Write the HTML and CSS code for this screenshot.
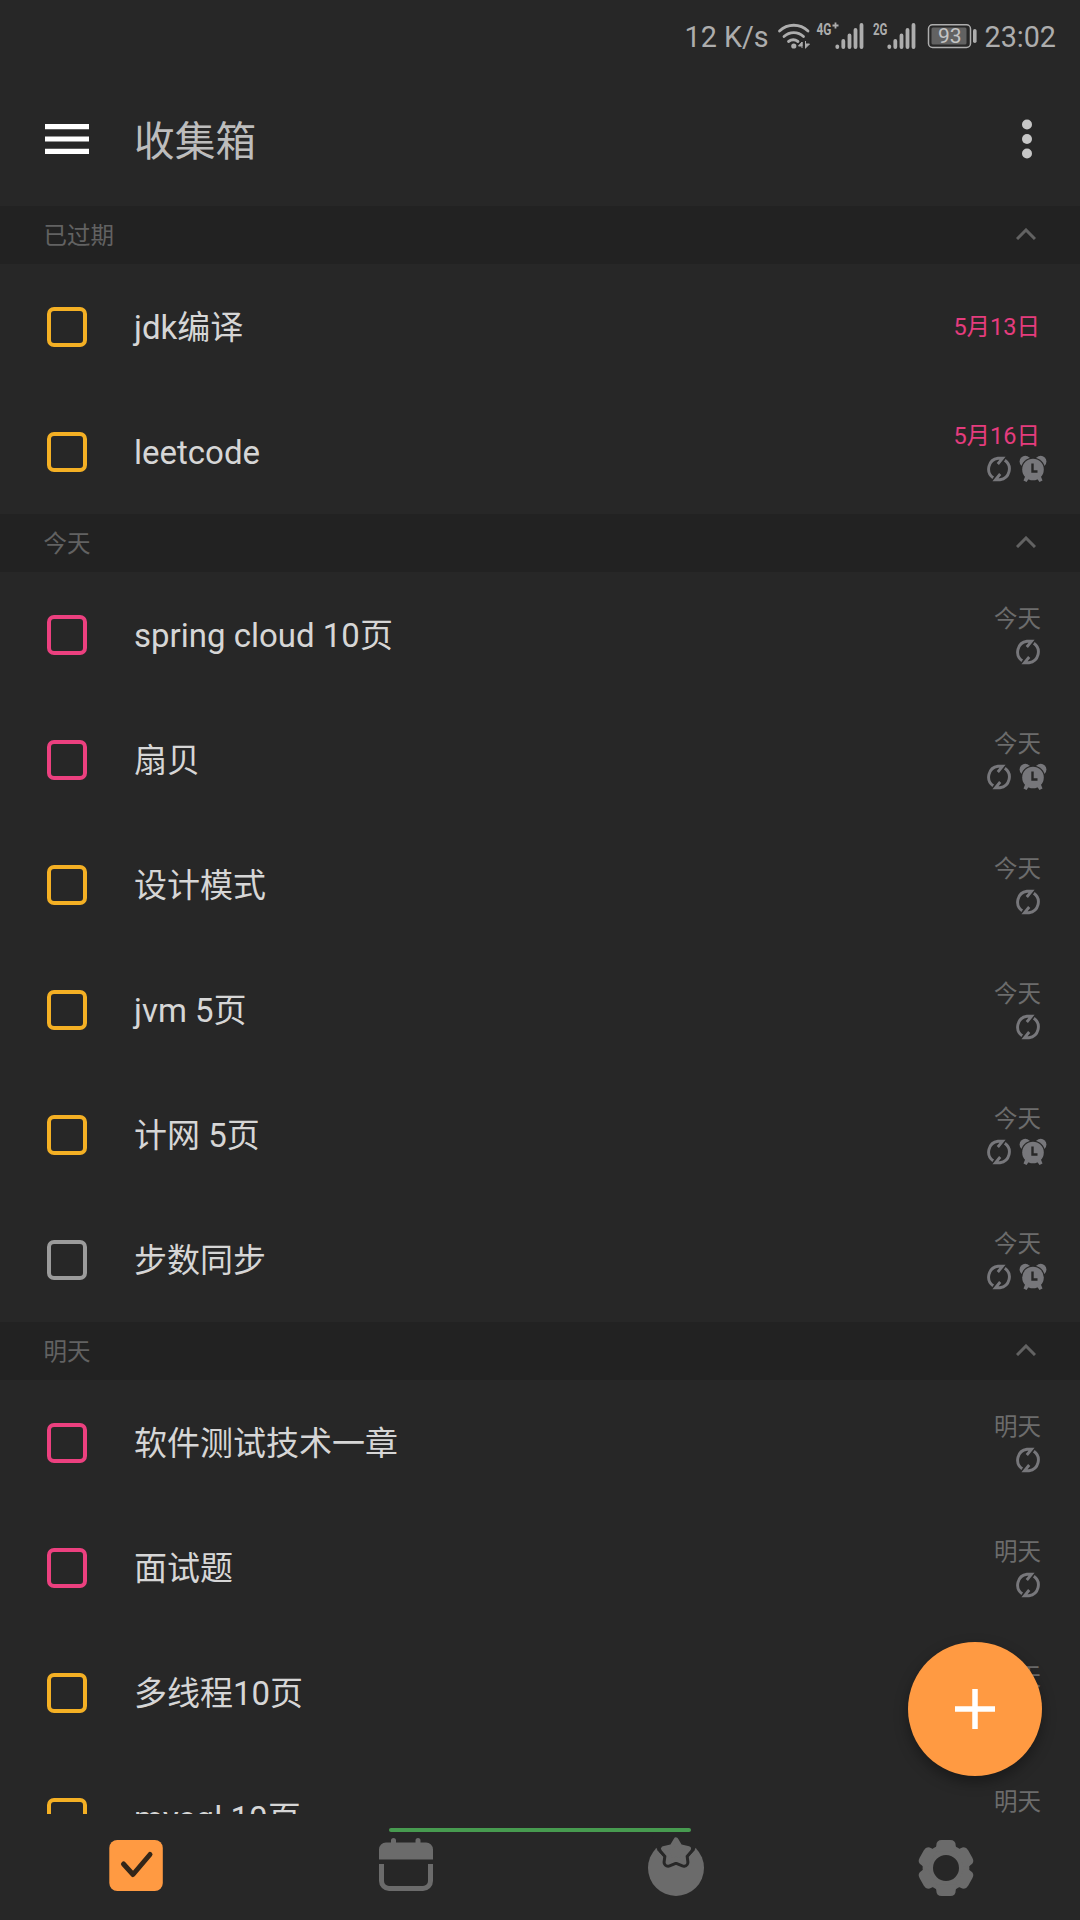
FILE: index.html
```html
<!DOCTYPE html>
<html lang="zh-CN">
<head>
<meta charset="utf-8">
<title>收集箱</title>
<link rel="stylesheet" href="styles.css">
</head>
<body>
<svg class="defs" aria-hidden="true">
  <symbol id="sync" viewBox="0 0 26 26">
    <g fill="none" stroke="currentColor" stroke-width="2.900">
      <path d="M7.200 21.800A10.800 10.800 0 0 1 12 2.300H16.500L11.800 8"/>
      <path d="M18.800 4.200A10.800 10.800 0 0 1 14 23.700H9.500L14.200 18"/>
    </g>
  </symbol>
  <symbol id="alarm" viewBox="0 0 28 28">
    <circle cx="6.300" cy="6.500" r="5.700" fill="currentColor"/>
    <circle cx="21.700" cy="6.500" r="5.700" fill="currentColor"/>
    <circle cx="14" cy="14.500" r="12" fill="#272727"/>
    <circle cx="14" cy="14.500" r="10.800" fill="currentColor"/>
    <path fill="currentColor" d="M6.500 20.500l3.500 3L7.500 27 4.500 25.500zM21.500 20.500l-3.500 3 2.500 3.500 3-1.500z"/>
    <path d="M13.500 8.500v8h5" fill="none" stroke="#272727" stroke-width="2.400"/>
  </symbol>
  <symbol id="chevron" viewBox="0 0 20 12">
    <path d="M1 11l9-9 9 9" fill="none" stroke="currentColor" stroke-width="3"/>
  </symbol>
</svg>

<div class="screen">
  <div class="status">
    <span>12 K/s</span>
    <svg class="status-icons" viewBox="776 16 204 40">
      <g fill="none" stroke="#adadad" stroke-width="2.800" stroke-linecap="round">
        <path d="M779.500 31a20.500 20.500 0 0 1 28.500 0"/>
        <path d="M784 36.500a14 14 0 0 1 19.500 0"/>
        <path d="M788.500 41.500a8 8 0 0 1 9.500 0" />
      </g>
      <circle cx="793.800" cy="46" r="2.600" fill="#adadad"/>
      <path d="M802 42v6M802 42l-3.500 4h3.500zM805.500 41v7.500M805.500 48l4-4h-4z" fill="#adadad" stroke="#adadad" stroke-width="1"/>
      <g fill="#adadad" font-family="Roboto, sans-serif" font-weight="700" font-size="16">
        <text x="816.500" y="35" textLength="15" lengthAdjust="spacingAndGlyphs">4G</text>
        <text x="873" y="35" textLength="14.500" lengthAdjust="spacingAndGlyphs">2G</text>
      </g>
      <path d="M832.500 25.500h6M835.500 22.500v6" stroke="#adadad" stroke-width="1.800"/>
      <g stroke="#adadad" stroke-width="3.800" stroke-linecap="round">
        <path d="M837.300 46.500v.500M843.300 41v6M849.500 35.500v11.500M855.500 30v17M861.500 25v22"/>
        <path d="M889.300 46.500v.500M895.300 41v6M901.500 35.500v11.500M907.500 30v17M913.500 25v22"/>
      </g>
      <rect x="928.500" y="24.800" width="42" height="22.600" rx="4" fill="none" stroke="#adadad" stroke-width="1.500"/>
      <rect x="931.500" y="27.500" width="35" height="17" rx="1.500" fill="#626262"/>
      <rect x="973" y="29" width="3.600" height="14" rx="1.800" fill="#adadad"/>
      <text x="949.800" y="43.300" text-anchor="middle" font-family="Roboto, sans-serif" font-size="21" fill="#c4c4c4">93</text>
    </svg>
    <span>23:02</span>
  </div>

  <header class="toolbar">
    <svg class="menu" viewBox="0 0 44 30"><path d="M0 2.700h44M0 15h44M0 27.300h44" stroke="#fff" stroke-width="5.200"/></svg>
    <h1>收集箱</h1>
    <svg class="more" viewBox="0 0 10 40" fill="#c6c6c6"><circle cx="5" cy="5.500" r="5"/><circle cx="5" cy="20" r="5"/><circle cx="5" cy="34.500" r="5"/></svg>
  </header>

  <main class="list">
    <div class="section"><span>已过期</span><svg><use href="#chevron"/></svg></div>
    <div class="task amber"><i class="box"></i><span class="name">jdk编译</span><div class="meta due single"><span>5月13日</span></div></div>
    <div class="task amber"><i class="box"></i><span class="name">leetcode</span><div class="meta due"><span>5月16日</span><div class="marks pair"><svg><use href="#sync"/></svg><svg class="alarm"><use href="#alarm"/></svg></div></div></div>

    <div class="section"><span>今天</span><svg><use href="#chevron"/></svg></div>
    <div class="task pink"><i class="box"></i><span class="name">spring cloud 10页</span><div class="meta"><span>今天</span><div class="marks"><svg><use href="#sync"/></svg></div></div></div>
    <div class="task pink"><i class="box"></i><span class="name">扇贝</span><div class="meta"><span>今天</span><div class="marks pair"><svg><use href="#sync"/></svg><svg class="alarm"><use href="#alarm"/></svg></div></div></div>
    <div class="task amber"><i class="box"></i><span class="name">设计模式</span><div class="meta"><span>今天</span><div class="marks"><svg><use href="#sync"/></svg></div></div></div>
    <div class="task amber"><i class="box"></i><span class="name">jvm 5页</span><div class="meta"><span>今天</span><div class="marks"><svg><use href="#sync"/></svg></div></div></div>
    <div class="task amber"><i class="box"></i><span class="name">计网 5页</span><div class="meta"><span>今天</span><div class="marks pair"><svg><use href="#sync"/></svg><svg class="alarm"><use href="#alarm"/></svg></div></div></div>
    <div class="task grey"><i class="box"></i><span class="name">步数同步</span><div class="meta"><span>今天</span><div class="marks pair"><svg><use href="#sync"/></svg><svg class="alarm"><use href="#alarm"/></svg></div></div></div>

    <div class="section"><span>明天</span><svg><use href="#chevron"/></svg></div>
    <div class="task pink"><i class="box"></i><span class="name">软件测试技术一章</span><div class="meta"><span>明天</span><div class="marks"><svg><use href="#sync"/></svg></div></div></div>
    <div class="task pink"><i class="box"></i><span class="name">面试题</span><div class="meta"><span>明天</span><div class="marks"><svg><use href="#sync"/></svg></div></div></div>
    <div class="task amber"><i class="box"></i><span class="name">多线程10页</span><div class="meta"><span>明天</span><div class="marks"><svg><use href="#sync"/></svg></div></div></div>
    <div class="task amber"><i class="box"></i><span class="name">mysql 10页</span><div class="meta"><span>明天</span><div class="marks"><svg><use href="#sync"/></svg></div></div></div>
  </main>

  <nav class="tabs">
    <svg viewBox="0 0 60 64">
      <rect x="3.300" y="4" width="53.500" height="51" rx="8" fill="#ff9a42"/>
      <path d="M17.500 28l9.500 10.500L44 18.500" fill="none" stroke="#332619" stroke-width="5" stroke-linecap="round" stroke-linejoin="round"/>
    </svg>
    <svg viewBox="0 0 60 64">
      <path d="M3 23.500V13.500a7 7 0 0 1 7-7h5V4.500a2.500 2.500 0 0 1 5 0v2h19.500v-2a2.500 2.500 0 0 1 5 0v2H50a7 7 0 0 1 7 7v10z" fill="#6b6b6b"/>
      <path d="M5.500 28v17a7.500 7.500 0 0 0 7.500 7.500h34a7.500 7.500 0 0 0 7.500-7.500V28" fill="none" stroke="#6b6b6b" stroke-width="5"/>
    </svg>
    <svg viewBox="0 0 60 64">
      <circle cx="30" cy="32" r="28" fill="#6b6b6b"/>
      <path d="M6 0h48L48.500 14.500 42 21H18l-6.500-6.500z" fill="#272727"/>
      <path d="M30 4l4 6.700 8.500 2-5.500 6.500.900 7-7.900-3.200-7.900 3.200.900-7-5.500-6.500 8.500-2z" fill="#272727" stroke="#272727" stroke-width="11" stroke-linejoin="round"/>
      <path d="M30 4l4 6.700 8.500 2-5.500 6.500.900 7-7.900-3.200-7.900 3.200.900-7-5.500-6.500 8.500-2z" fill="#6b6b6b" stroke="#6b6b6b" stroke-width="5" stroke-linejoin="round"/>
    </svg>
    <svg viewBox="0 0 60 64">
      <circle cx="30" cy="32" r="18.200" fill="none" stroke="#6b6b6b" stroke-width="10.400"/>
      <g fill="#6b6b6b">
        <path id="tooth" d="M17 15.500Q20.300 13 20.300 9.500q0-5.500 5.500-5.500h8.400q5.500 0 5.500 5.500 0 3.500 3.300 6z"/>
        <use href="#tooth" transform="rotate(60 30 32)"/><use href="#tooth" transform="rotate(120 30 32)"/><use href="#tooth" transform="rotate(180 30 32)"/><use href="#tooth" transform="rotate(240 30 32)"/><use href="#tooth" transform="rotate(300 30 32)"/>
      </g>
    </svg>
    <div class="indicator"></div>
  </nav>

  <div class="fab"><svg viewBox="0 0 40 40"><path d="M0 20h40M20 0v40" stroke="#fff" stroke-width="5.500"/></svg></div>
</div>
</body>
</html>
```

FILE: styles.css
```css
* { box-sizing: border-box; }
body {
  margin: 0;
  background: #272727;
  font-family: Roboto, "Noto Sans CJK SC", sans-serif;
}
.defs { position: absolute; width: 0; height: 0; }
.screen {
  position: relative;
  width: 1080px;
  height: 1920px;
  overflow: hidden;
  display: flex;
  flex-direction: column;
}
svg { display: block; flex: none; }

.status {
  height: 72px;
  flex: none;
  display: flex;
  justify-content: flex-end;
  align-items: center;
  padding: 0 24px 0 0;
  color: #adadad;
  font-size: 28.700px;
  white-space: pre;
}
.status span { padding-top: 2px; }
.status-icons { width: 204px; height: 40px; margin: 0 5px 0 7px; }

.toolbar {
  height: 134px;
  flex: none;
  display: flex;
  align-items: center;
  padding: 0 48px 0 45px;
}
.menu { width: 44px; height: 30px; }
.toolbar h1 {
  margin: 6px 0 0 45px;
  flex: 1;
  font-size: 40.700px;
  font-weight: 400;
  line-height: 60px;
  color: #bdbdbd;
}
.more { width: 10px; height: 40px; }

.list { height: 1608px; flex: none; overflow: hidden; }
.section {
  height: 58px;
  display: flex;
  align-items: center;
  justify-content: space-between;
  padding: 0 44px 0 43.500px;
  background: #222;
  color: #626262;
  font-size: 23.500px;
}
.section span { padding-bottom: 2px; }
.section svg { width: 20px; height: 12px; margin-bottom: 2px; }

.task {
  height: 125px;
  display: flex;
  align-items: center;
  padding: 0 39px 0 47px;
}
.box {
  width: 40px;
  height: 40px;
  margin-top: 1px;
  border: 4px solid;
  border-radius: 7px;
}
.amber .box { border-color: #f4b024; }
.pink .box { border-color: #ec407f; }
.grey .box { border-color: #9b9b9b; }
.name {
  flex: 1;
  margin: 3px 0 0 47px;
  font-size: 33px;
  line-height: 48px;
  color: #d6d6d6;
}
.meta {
  display: flex;
  flex-direction: column;
  align-items: flex-end;
  color: #6c6c6c;
  font-size: 23.500px;
  line-height: 34px;
}
.due > span { color: #e53c7e; padding-right: 1px; }
.single { padding-top: 1px; }
.marks { display: flex; gap: 7px; color: #77777b; margin: 3px 0 2px; }
.marks svg { width: 26px; height: 26px; }
.marks .alarm { width: 28px; height: 28px; margin: -1px 0; }
.pair { margin-right: -6px; }

.tabs {
  position: relative;
  flex: 1;
  display: grid;
  grid-template-columns: repeat(4, 270px);
  justify-items: center;
  padding: 22px 0 0 1px;
}
.tabs svg { width: 60px; height: 64px; }
.indicator {
  position: absolute;
  left: 389px;
  top: 14px;
  width: 302px;
  height: 4px;
  border-radius: 2px;
  background: #479b50;
}
.fab {
  position: absolute;
  left: 908px;
  top: 1642px;
  width: 134px;
  height: 134px;
  border-radius: 50%;
  background: #ff9a42;
  box-shadow: 0 6px 14px rgba(0, 0, 0, .35);
  display: grid;
  place-items: center;
}
.fab svg { width: 40px; height: 40px; }
```
